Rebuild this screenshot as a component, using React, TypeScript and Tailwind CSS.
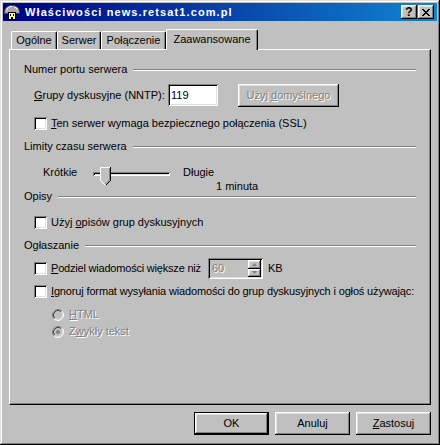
import React from "react";

// classic 3D edges
const RAISED =
  "shadow-[inset_-1px_-1px_0_#000,inset_1px_1px_0_#fff,inset_-2px_-2px_0_#808080,inset_2px_2px_0_#dfdfdf]";
const SUNKEN =
  "shadow-[inset_1px_1px_0_#808080,inset_-1px_-1px_0_#fff,inset_2px_2px_0_#000,inset_-2px_-2px_0_#dfdfdf]";
const DISABLED = "text-[#808080] [text-shadow:1px_1px_0_#fff]";

function U({ children }: { children: React.ReactNode }) {
  return <span className="underline decoration-1 underline-offset-[1px]">{children}</span>;
}

function Checkbox() {
  return <div className={`w-[13px] h-[13px] shrink-0 bg-white ${SUNKEN}`} />;
}

function Radio({ checked }: { checked?: boolean }) {
  return (
    <svg width="12" height="12" viewBox="0 0 12 12" className="shrink-0">
      <circle cx="6" cy="6" r="5" fill="#c0c0c0" />
      <path d="M2.11 9.89 A5.5 5.5 0 0 1 9.89 2.11" stroke="#808080" fill="none" />
      <path d="M9.89 2.11 A5.5 5.5 0 0 1 2.11 9.89" stroke="#fff" fill="none" />
      <path d="M2.82 9.18 A4.5 4.5 0 0 1 9.18 2.82" stroke="#404040" fill="none" />
      <path d="M9.18 2.82 A4.5 4.5 0 0 1 2.82 9.18" stroke="#dfdfdf" fill="none" />
      {checked && <circle cx="6" cy="6" r="2" fill="#808080" />}
    </svg>
  );
}

function Group({ title }: { title: string }) {
  return (
    <div className="flex items-center h-[13px] gap-[6px]">
      <span className="leading-[13px] whitespace-nowrap">{title}</span>
      <div className="flex-1 h-[2px] bg-white border-t border-t-[#808080]" />
    </div>
  );
}

function TitleIcon() {
  return (
    <svg width="16" height="16" viewBox="0 0 16 16">
      <path d="M0.5 9.5 C0 4 3.5 1.5 8 1.5 C12.5 1.5 16 4 15.5 9.5 Z" fill="#a8a8a8" stroke="#404040" />
      <path d="M2.5 6.5 C3 3.5 5.5 2.5 8 2.5 M10 3 C12 3.5 13 4.5 13.5 6" stroke="#fff" fill="none" />
      <rect x="4.5" y="8.5" width="7" height="7" fill="#ffff80" stroke="#000" />
      <rect x="6" y="10" width="1" height="2" fill="#000" />
      <rect x="9" y="10" width="1" height="2" fill="#000" />
      <rect x="7" y="13" width="2" height="2" fill="#000" />
    </svg>
  );
}

function CaptionButton({ children }: { children: React.ReactNode }) {
  return (
    <div
      className={`w-[16px] h-[14px] bg-[#c0c0c0] ${RAISED} flex items-center justify-center text-black font-bold text-[12px] leading-none`}
    >
      {children}
    </div>
  );
}

function Tab({ label, width }: { label: string; width: number }) {
  return (
    <div
      className="h-[18px] flex items-center justify-center border-l border-t border-white rounded-tl-[2px] rounded-tr-[2px] border-r border-r-black shadow-[inset_-1px_0_0_#808080]"
      style={{ width }}
    >
      {label}
    </div>
  );
}

function Button({ children, def, disabled }: { children: React.ReactNode; def?: boolean; disabled?: boolean }) {
  if (def) {
    return (
      <div className="w-[75px] h-[23px] border border-black">
        <div className={`w-full h-full ${RAISED} flex items-center justify-center`}>
          <span>{children}</span>
        </div>
      </div>
    );
  }
  return (
    <div className={`h-[23px] ${RAISED} flex items-center justify-center ${disabled ? DISABLED : ""}`}>
      <span className="whitespace-pre">{children}</span>
    </div>
  );
}

function Slider() {
  return (
    <div className="relative w-[77px] h-[20px]">
      <div className={`absolute left-0 top-[6px] w-[77px] h-[4px] bg-[#c0c0c0] ${SUNKEN}`} />
      <svg className="absolute left-[7px] top-[1px]" width="11" height="18" viewBox="0 0 11 18">
        <polygon points="0,0 10,0 10,13 5,18 0,13" fill="#c0c0c0" />
        <path d="M0.5 13 V0.5 H10" stroke="#fff" fill="none" />
        <path d="M0.5 13.5 L5 18" stroke="#fff" fill="none" />
        <path d="M10.5 0 V13.5 L5.5 18.5" stroke="#000" fill="none" />
        <path d="M9.5 1 V13 L5.5 17" stroke="#808080" fill="none" />
      </svg>
    </div>
  );
}

function Spinner() {
  return (
    <div className={`w-[55px] h-[21px] bg-[#c0c0c0] ${SUNKEN} flex items-stretch p-[2px]`}>
      <span className={`flex-1 pl-[2px] leading-[17px] ${DISABLED}`}>60</span>
      <div className="flex flex-col w-[13px]">
        <div className={`flex-1 ${RAISED} flex items-center justify-center`}>
          <svg width="5" height="3" viewBox="0 0 5 3">
            <polygon points="2.5,0 5,3 0,3" fill="#808080" />
          </svg>
        </div>
        <div className={`flex-1 ${RAISED} flex items-center justify-center`}>
          <svg width="5" height="3" viewBox="0 0 5 3">
            <polygon points="0,0 5,0 2.5,3" fill="#808080" />
          </svg>
        </div>
      </div>
    </div>
  );
}

export default function App() {
  return (
    <div
      className={`w-[440px] h-[445px] bg-[#c0c0c0] p-[3px] flex flex-col text-[11px] leading-[13px] text-black font-['Liberation_Sans',Arial,sans-serif] shadow-[inset_-1px_-1px_0_#000,inset_1px_1px_0_#dfdfdf,inset_-2px_-2px_0_#808080,inset_2px_2px_0_#fff]`}
    >
      {/* pasek tytułu */}
      <div className="h-[18px] flex items-center bg-[linear-gradient(to_right,#000080,#1084d0)] pl-[1px] pr-[3px]">
        <TitleIcon />
        <span className="ml-[5px] text-white font-bold tracking-[1.1px] flex-1 whitespace-nowrap">
          Właściwości news.retsat1.com.pl
        </span>
        <CaptionButton>?</CaptionButton>
        <div className="ml-[1px]">
          <CaptionButton>
            <svg width="8" height="7" viewBox="0 0 8 7">
              <path d="M0 0 L7 7 M1 0 L8 7 M7 0 L0 7 M8 0 L1 7" stroke="#000" strokeWidth="1" />
            </svg>
          </CaptionButton>
        </div>
      </div>

      <div className="px-[6px] flex flex-col">
        {/* zakładki */}
        <div className="mt-[8px] h-[20px] flex items-end pl-[2px]">
          <Tab label="Ogólne" width={46} />
          <Tab label="Serwer" width={44} />
          <Tab label="Połączenie" width={65} />
          <div className="relative z-10 -mb-px w-[92px] h-[21px] bg-[#c0c0c0] flex items-center justify-center pb-[1px] border-l border-t border-white rounded-tl-[2px] rounded-tr-[2px] border-r border-r-black shadow-[inset_-1px_0_0_#808080]">
            Zaawansowane
          </div>
        </div>

        {/* panel */}
        <div className="h-[356px] border-l border-t border-white border-r border-b border-r-black border-b-black shadow-[inset_-1px_-1px_0_#808080] px-[14px] flex flex-col">
          <div className="mt-[13px]">
            <Group title="Numer portu serwera" />
          </div>
          <div className="mt-[8px] h-[22px] flex items-center pl-[10px]">
            <span className="w-[134px] whitespace-nowrap">
              <U>G</U>rupy dyskusyjne (NNTP):
            </span>
            <div className={`w-[50px] h-[22px] bg-white ${SUNKEN} pl-[3px] leading-[22px]`}>119</div>
            <div className="ml-[20px] w-[101px]">
              <Button disabled>
                Użyj <U>d</U>omyślnego
              </Button>
            </div>
          </div>
          <div className="mt-[11px] h-[13px] flex items-center pl-[10px] gap-[4px]">
            <Checkbox />
            <span className="whitespace-nowrap">
              <U>T</U>en serwer wymaga bezpiecznego połączenia (SSL)
            </span>
          </div>

          <div className="mt-[10px]">
            <Group title="Limity czasu serwera" />
          </div>
          <div className="mt-[13px] h-[24px] flex items-start pl-[19px]">
            <span className="w-[50px]">Krótkie</span>
            <Slider />
            <div className="ml-[13px] flex flex-col">
              <span>Długie</span>
              <span className="mt-[1px] pl-[33px] whitespace-nowrap">1 minuta</span>
            </div>
          </div>

          <div>
            <Group title="Opisy" />
          </div>
          <div className="mt-[13px] h-[13px] flex items-center pl-[10px] gap-[4px]">
            <Checkbox />
            <span className="whitespace-nowrap">
              Użyj <U>o</U>pisów grup dyskusyjnych
            </span>
          </div>

          <div className="mt-[10px]">
            <Group title="Ogłaszanie" />
          </div>
          <div className="mt-[6px] h-[21px] flex items-center pl-[10px]">
            <Checkbox />
            <span className="ml-[4px] w-[157px] whitespace-nowrap tracking-[-0.2px]">
              <U>P</U>odziel wiadomości większe niż
            </span>
            <Spinner />
            <span className="ml-[5px]">KB</span>
          </div>
          <div className="mt-[6px] h-[13px] flex items-center pl-[10px] gap-[4px]">
            <Checkbox />
            <span className="whitespace-nowrap tracking-[-0.15px]">
              <U>I</U>gnoruj format wysyłania wiadomości do grup dyskusyjnych i ogłoś używając:
            </span>
          </div>
          <div className={`mt-[10px] h-[13px] flex items-center pl-[28px] gap-[5px] ${DISABLED}`}>
            <Radio />
            <span>
              <U>H</U>TML
            </span>
          </div>
          <div className={`mt-[4px] h-[13px] flex items-center pl-[28px] gap-[5px] ${DISABLED}`}>
            <Radio checked />
            <span>
              Z<U>w</U>ykły tekst
            </span>
          </div>
        </div>

        {/* przyciski */}
        <div className="mt-[7px] flex justify-end gap-[6px]">
          <Button def>OK</Button>
          <div className="w-[75px]">
            <Button>Anuluj</Button>
          </div>
          <div className="w-[75px]">
            <Button>
              <U>Z</U>astosuj
            </Button>
          </div>
        </div>
      </div>
    </div>
  );
}
